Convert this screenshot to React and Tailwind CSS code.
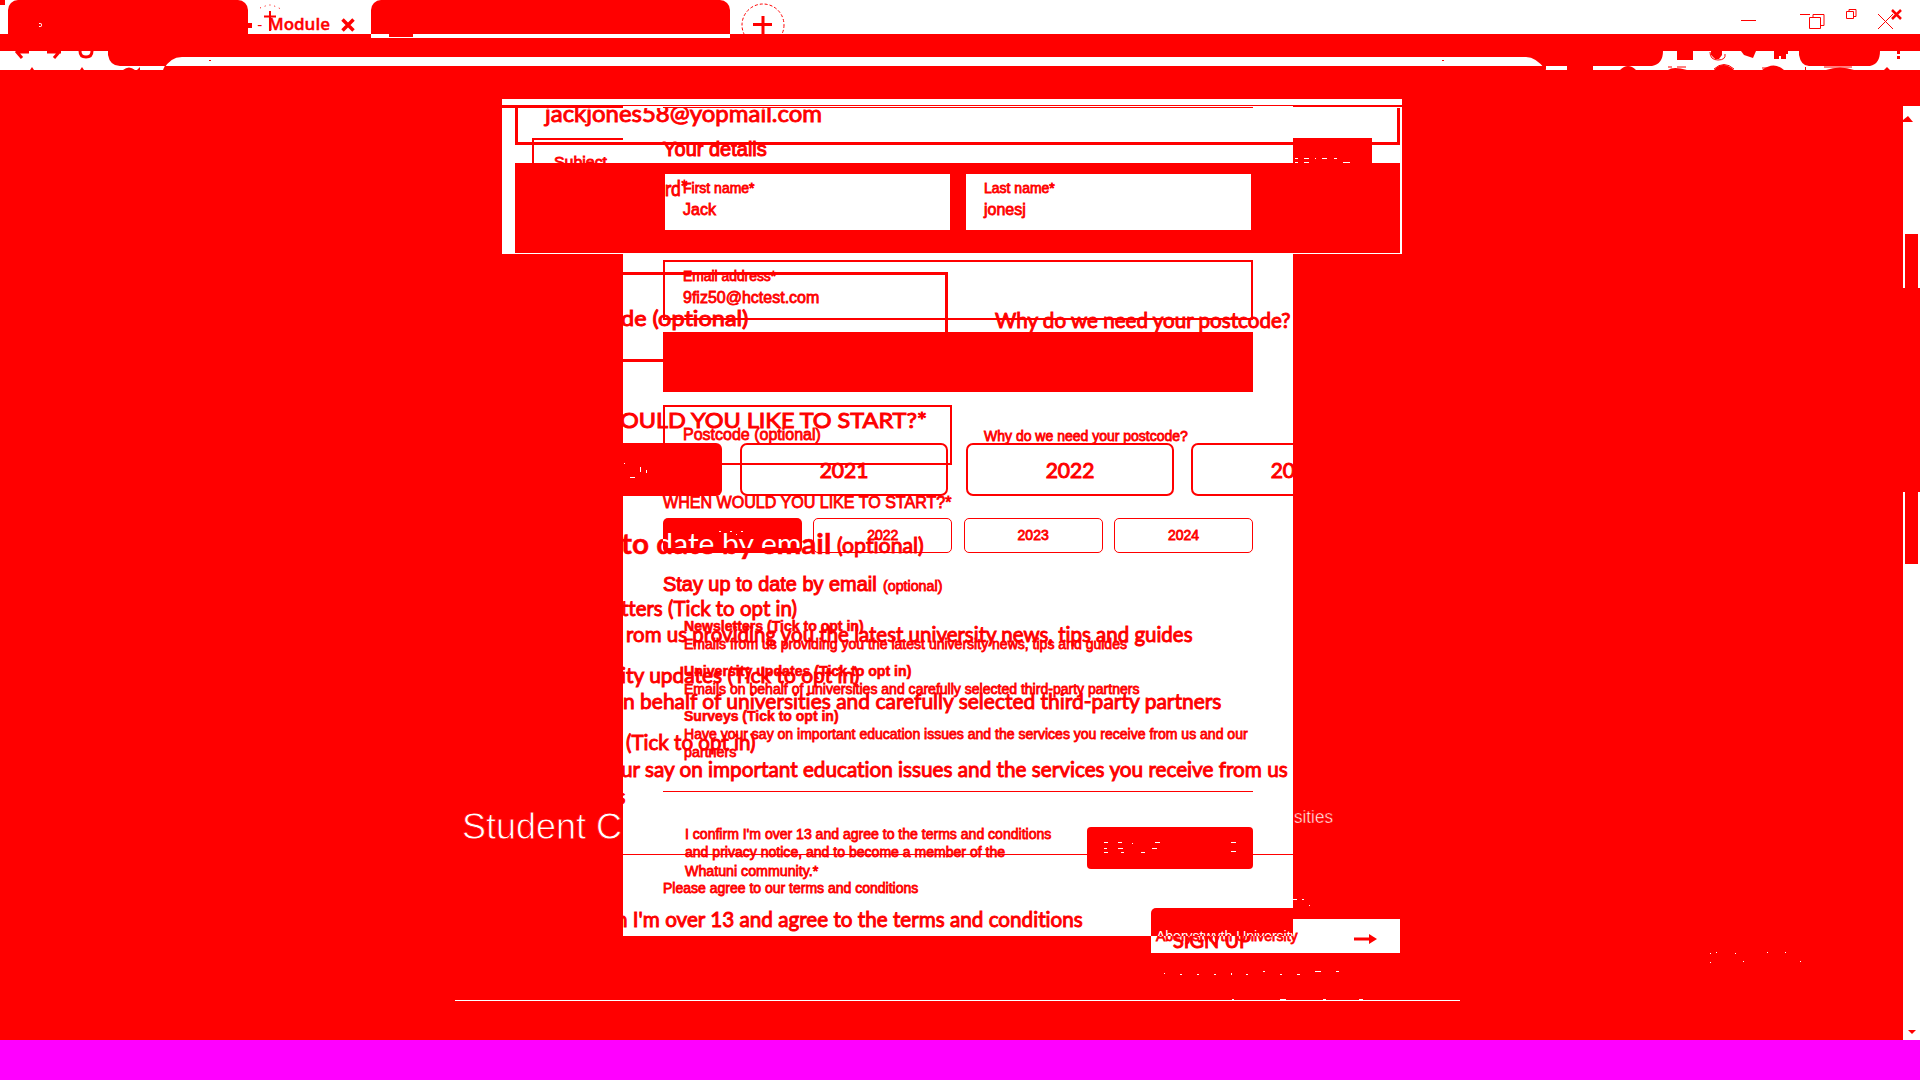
import { useLayoutEffect, useRef, useState } from "react";

/* Single line of text stretched to an exact width. */
function Fit({ w, className = "", children }) {
  const ref = useRef(null);
  const [k, setK] = useState(1);
  useLayoutEffect(() => {
    if (ref.current) setK(w / ref.current.offsetWidth);
  }, [w]);
  return (
    <span ref={ref} className={"inline-block origin-left whitespace-pre " + className} style={{ transform: `scaleX(${k})` }}>
      {children}
    </span>
  );
}

function Line({ w, className = "", text = "", children }) {
  return (
    <div className={"flex h-4 shrink-0 leading-4 " + className}>
      <Fit w={w} className={text}>{children}</Fit>
    </div>
  );
}

function Chrome() {
  return (
    <header className="h-[70px] bg-[#ff0000]">
      <div className="flex h-[34px] bg-white">
        <div className="h-[5px] w-[5px] bg-[#ff0000]" />
        <div className="ml-[3px] h-[34px] w-[240px] rounded-t-[10px] bg-[#ff0000] pl-[31px] pt-[23px]">
          <div className="h-[4px] w-[3px] rounded-r border border-l-0 border-white" />
        </div>
        <div className="flex h-[34px] w-[123px] items-start">
          <div className="mt-[23px] h-[5px] w-[4px] bg-[#ff0000]" />
          <span className="ml-[5px] mt-[16px] w-[6px] text-[15px] leading-4">-</span>
          <Fit w={62} className="ml-[5px] mt-[14px] font-['Open_Sans'] text-[17px] font-semibold leading-[20px] [-webkit-text-stroke:0.4px_#f00]">Module</Fit>
          <svg className="ml-auto mr-[16px] mt-[18px] shrink-0" width="14" height="14" viewBox="0 0 14 14" stroke="#f00" strokeWidth="3.500"><path d="M1.500 1.500l11 11M12.500 1.500l-11 11" /></svg>
        </div>
        <div className="h-[34px] w-[359px] rounded-t-[10px] bg-[#ff0000]" />
        <svg className="ml-[11px]" width="44" height="34" viewBox="0 0 44 34" fill="none" stroke="#f00">
          <circle cx="22" cy="25" r="21" strokeDasharray="3 2" />
          <path d="M12 24.500h19M22 16v18" strokeWidth="3" />
        </svg>
        <svg className="ml-auto" width="200" height="34" viewBox="0 0 200 34" fill="none" stroke="#f00">
          <path d="M21 20.500h15M80 14.500h10M89.500 17.500h11v11h-11zM93 17.500v-3h11v11h-3M126.500 11.500h7v7h-7zM129 11.500v-2h7v7h-2M158 14l15 15M173 14l-15 15" />
          <path d="M172 10l9 9M181 10l-9 9" strokeWidth="2.500" />
        </svg>
      </div>
      <div className="flex h-[4px] pl-[371px]">
        <div className="w-[359px] bg-white"><div className="ml-[18px] h-[3px] w-[24px] bg-[#ff0000]" /></div>
      </div>
      <svg className="mt-[13px] block" width="1920" height="19" viewBox="0 0 1920 19">
        <path fill="#fff" d="M0 0H108V4Q110 15 120 15H165L163 19H0ZM163 19Q170 6 182 6H1526Q1536 6 1546 19ZM1546 15h21v4h-21ZM1593 15H1652Q1663 13 1663 0H1799V4Q1801 15 1809 15H1870Q1880 13 1880 0H1920V19H1593Z" />
        <path fill="#f00" d="M165 15H1544L1546 19H163Z" />
        <path fill="none" stroke="#f00" strokeWidth="3" d="M16 0l6 7M16 1h13M47 1h14M60 0l-6 7M80 0q0 6 6 6t6-6" />
        <path fill="#f00" d="M30 19l2-3 2 3zM80 19l2-3 2 3zM123 19q6-5 12 0zM137 19l3-3v3zM209 9h2v1h-2zM1442 9h2v1h-2zM1677 0h16v9h-16zM1711 0h11v4l-3 4h-4l-4-4zM1741 0h15l-3 7-9-3zM1774 0h14v3h-2v5h-5V5h-2v3h-5zM1897 0h3v3h-3zM1897 5h3v3h-3zM1620 19q8-8 16 0zM1668 19q5-4 19 0zM1714 19q9-10 20 0zM1762 19q12-9 22 0zM1805 16h1v3h-1zM1826 19q14-5 28 0zM1884 19l3-3 3 3z" />
        <path fill="none" stroke="#f00" d="M1710 1q0 8 8 8t7-6M1668 16h4M1677 16h9M1714 18q10-9 20 0M1762 17h10M1824 16h28" />
      </svg>
      <svg className="absolute left-[258px] top-[2px]" width="26" height="32" viewBox="0 0 26 32" stroke="#f00" fill="none">
        <path d="M6 14.500h12M12 9v20" strokeWidth="2" /><path d="M2 6l8-3 4 0 9 4" strokeDasharray="1 4" />
      </svg>
    </header>
  );
}

function UpperPanel() {
  return (
    <section className="absolute left-[502px] top-[29px] flex h-[155px] w-[900px] flex-col overflow-hidden bg-white">
      <div className="mt-[6px] flex h-[3px] shrink-0 items-start">
        <div className="h-[3px] w-[121px] bg-[#ff0000]" />
        <div className="h-px w-[670px] bg-[#ff0000]" />
        <div className="h-[2px] w-[109px] bg-[#ff0000]" />
      </div>
      <div className="ml-[13px] flex h-[37px] w-[885px] shrink-0 items-start overflow-hidden border-x-[3px] border-b-[3px] border-t-0 border-[#ff0000] pl-[27px]">
        <Fit w={277} className="-mt-[7px] text-[23px] leading-6 [-webkit-text-stroke:0.9px_#f00]">jackjones58@yopmail.com</Fit>
      </div>
      <div className="mt-[18px] ml-[13px] h-[90px] w-[885px] shrink-0 bg-[#ff0000]" />
      <div className="absolute left-[30px] top-[39px] flex h-[25px] w-[91px] items-start overflow-hidden border-l-2 border-t-2 border-[#ff0000] pl-[20px] pt-[14px]">
        <Fit w={53} className="font-['Liberation_Sans'] text-[15px] leading-4 [-webkit-text-stroke:0.8px_#f00]">Subject</Fit>
      </div>
      <div className="absolute left-[791px] top-[39px] h-[25px] w-[79px] bg-[#ff0000] pt-[20px] pl-[2px]">
        <div className="flex gap-[6px]">
          <i className="h-px w-[3px] bg-white" /><i className="h-px w-[5px] bg-white" /><i className="h-px w-px bg-white" /><i className="h-px w-[5px] bg-white" /><i className="ml-px h-px w-[3px] bg-white" />
        </div>
        <div className="mt-[3px] flex gap-[6px]">
          <i className="h-px w-[3px] bg-white" /><i className="h-px w-[5px] bg-white" /><i className="ml-[28px] h-px w-[7px] bg-white" />
        </div>
      </div>
    </section>
  );
}

const small = "text-[14px] [-webkit-text-stroke:0.8px_#f00]";
const mid = "text-[16px] [-webkit-text-stroke:0.8px_#f00]";
const head = "text-[20px] [-webkit-text-stroke:1px_#f00]";
const strong = "text-[14px] font-bold [-webkit-text-stroke:0.6px_#f00]";

function DetailForm() {
  return (
    <div className="absolute inset-0 flex flex-col pl-10 font-['Liberation_Sans']">
      <div className="mt-px h-px w-[590px] shrink-0 bg-[#ff0000]" />
      <Line w={104} className="mt-[33px]" text={head}>Your details</Line>
      <div className="ml-[2px] mt-[17px] flex h-[56px] shrink-0 gap-4">
        <div className="w-[285px] bg-white pl-[18px] pt-[6px]">
          <Line w={72} text={small}>First name*</Line>
          <Line w={33} className="mt-[6px]" text={mid}>Jack</Line>
        </div>
        <div className="w-[285px] bg-white pl-[18px] pt-[6px]">
          <Line w={71} text={small}>Last name*</Line>
          <Line w={42} className="mt-[6px]" text={mid}>jonesj</Line>
        </div>
      </div>
      <div className="mt-[30px] h-[60px] w-[590px] shrink-0 border-2 border-[#ff0000] pl-[18px] pt-[6px]">
        <Line w={93} text={small}>Email address*</Line>
        <Line w={136} className="mt-[6px]" text={mid}>9fiz50@hctest.com</Line>
      </div>
      <div className="mt-3 h-[60px] w-[590px] shrink-0 bg-[#ff0000]" />
      <div className="mt-[13px] flex h-[60px] shrink-0">
        <div className="w-[289px] border-2 border-[#ff0000] pl-[18px] pt-[20px]">
          <Line w={138} text={mid}>Postcode (optional)</Line>
        </div>
        <Line w={204} className="ml-8 mt-[23px]" text={small}>Why do we need your postcode?</Line>
      </div>
      <Line w={288} className="mt-[30px]" text={mid}>WHEN WOULD YOU LIKE TO START?*</Line>
      <div className="mt-[7px] flex h-[35px] w-[590px] shrink-0 justify-between text-center text-[14px] leading-[32px] [-webkit-text-stroke:0.8px_#f00]">
        <div className="flex w-[139px] items-start gap-[4px] rounded-[5px] bg-[#ff0000] pl-[56px] pt-[13px]">
          <i className="h-px w-[2px] bg-white" /><i className="mt-[2px] h-px w-px bg-white" /><i className="h-px w-[2px] bg-white" /><i className="mt-[3px] h-px w-px bg-white" /><i className="h-px w-[2px] bg-white" />
        </div>
        <div className="w-[139px] rounded-[5px] border border-[#ff0000]">2022</div>
        <div className="w-[139px] rounded-[5px] border border-[#ff0000]">2023</div>
        <div className="w-[139px] rounded-[5px] border border-[#ff0000]">2024</div>
      </div>
      <div className="mt-[23px] flex h-4 shrink-0">
        <div className="w-[220px]"><Line w={214} text={head}>Stay up to date by email</Line></div>
        <Line w={59} className="mt-[2px]" text={small}>(optional)</Line>
      </div>
      <div className="ml-[21px] flex flex-col">
        <Line w={180} className="mt-[26px]" text={strong}>Newsletters (Tick to opt in)</Line>
        <Line w={443} className="mt-[2px]" text={small}>Emails from us providing you the latest university news, tips and guides</Line>
        <Line w={227} className="mt-[11px]" text={strong}>University updates (Tick to opt in)</Line>
        <Line w={455} className="mt-[2px]" text={small}>Emails on behalf of universities and carefully selected third-party partners</Line>
        <Line w={155} className="mt-[11px]" text={strong}>Surveys (Tick to opt in)</Line>
        <Line w={564} className="mt-[2px]" text={small}>Have your say on important education issues and the services you receive from us and our</Line>
        <Line w={52} className="mt-[2px]" text={small}>partners</Line>
      </div>
      <div className="mt-[31px] h-px w-[590px] shrink-0 bg-[#ff0000]" />
      <div className="mt-[34px] flex h-[53px] w-[590px] shrink-0 justify-between pl-[22px]">
        <div className="flex w-[366px] flex-col">
          <Line w={366} text={small}>I confirm I'm over 13 and agree to the terms and conditions</Line>
          <Line w={320} className="mt-[2px]" text={small}>and privacy notice, and to become a member of the</Line>
          <Line w={133} className="mt-[3px]" text={small}>Whatuni community.*</Line>
        </div>
        <div className="mt-px flex h-[42px] w-[166px] justify-between rounded-[4px] bg-[#ff0000] px-[17px] pt-[15px]">
          <div className="flex flex-col justify-between pb-[16px]">
            <div className="flex gap-[10px]"><i className="h-px w-[4px] bg-white" /><i className="h-px w-[4px] bg-white" /><i className="mt-px h-px w-px bg-white" /><i className="ml-[12px] h-px w-[5px] bg-white" /></div>
            <div className="flex gap-[11px]"><i className="h-px w-[3px] bg-white" /><i className="h-px w-[5px] bg-white" /><i className="ml-[18px] h-px w-[5px] bg-white" /></div>
            <div className="flex gap-[13px]"><i className="h-px w-[4px] bg-white" /><i className="h-px w-[3px] bg-white" /><i className="ml-[4px] h-px w-[4px] bg-white" /></div>
          </div>
          <div className="h-[10px] w-[5px] border-y border-white" />
        </div>
      </div>
      <Line w={255} className="mt-px" text={small}>Please agree to our terms and conditions</Line>
    </div>
  );
}

const big = "text-[22px] [-webkit-text-stroke:1px_#f00]";

function EnlargedForm() {
  return (
    <div className="absolute inset-0 flex flex-col overflow-hidden">
      <Line w={23} className="ml-[42px] mt-[74px]" text={big}>rd*</Line>
      <div className="mt-[76px] flex h-[90px] shrink-0">
        <div className="w-[325px] shrink-0 border-[3px] border-l-0 border-[#ff0000] pt-[35px]">
          <Line w={127} className="-ml-[2px]" text={big}>de (optional)</Line>
        </div>
        <Line w={296} className="ml-[47px] mt-[40px]" text={big}>Why do we need your postcode?</Line>
      </div>
      <Line w={307} className="-ml-[3px] mt-[50px]" text={big}>OULD YOU LIKE TO START?*</Line>
      <div className="mt-[15px] flex h-[53px] shrink-0 gap-[18px] text-center text-[21px] leading-[50px] [-webkit-text-stroke:1px_#f00]">
        <div className="flex w-[99px] shrink-0 gap-[5px] rounded-r-[6px] bg-[#ff0000] pl-px pt-[20px]">
          <i className="h-px w-px bg-white" /><i className="mt-[14px] h-px w-[5px] bg-white" /><i className="mt-[4px] h-[5px] w-px bg-white" /><i className="mt-[7px] h-[3px] w-px bg-white" />
        </div>
        <div className="w-[208px] shrink-0 rounded-[7px] border-2 border-[#ff0000]">2021</div>
        <div className="w-[208px] shrink-0 rounded-[7px] border-2 border-[#ff0000]">2022</div>
        <div className="-ml-px w-[208px] shrink-0 rounded-[7px] border-2 border-[#ff0000]">2023</div>
      </div>
      <div className="mt-[39px] flex h-4 shrink-0">
        <div className="relative w-[214px]">
          <Line w={210} className="-ml-[2px]" text="text-[29px] font-bold [-webkit-text-stroke:0.5px_#f00]">to date by email</Line>
          <div className="absolute -top-[10px] left-0 h-[28px] w-[179px] overflow-hidden pt-[10px] [clip-path:inset(0_0_5px_40px)]">
            <Line w={210} className="-ml-[2px]" text="text-[29px] text-white">to date by email</Line>
          </div>
        </div>
        <Line w={87} className="mt-[2px]" text={big}>(optional)</Line>
      </div>
      <Line w={176} className="-ml-[2px] mt-[49px]" text={big}>tters (Tick to opt in)</Line>
      <Line w={567} className="ml-[3px] mt-[10px]" text={big}>rom us providing you the latest university news, tips and guides</Line>
      <Line w={238} className="-ml-[2px] mt-[25px]" text={big}>ity updates (Tick to opt in)</Line>
      <Line w={598} className="mt-[10px]" text={big}>n behalf of universities and carefully selected third-party partners</Line>
      <Line w={130} className="ml-[3px] mt-[25px]" text={big}>(Tick to opt in)</Line>
      <Line w={667} className="-ml-[2px] mt-[11px]" text={big}>ur say on important education issues and the services you receive from us</Line>
      <Line w={10} className="-ml-[7px] mt-[11px]" text={big}>s</Line>
      <div className="mt-[50px] h-px shrink-0 bg-[#ff0000]" />
      <div className="mt-[53px] flex h-7 shrink-0 justify-between">
        <div className="-ml-[7px] w-[500px]"><Line w={467} className="mt-[3px]" text={big}>n I'm over 13 and agree to the terms and conditions</Line></div>
        <div className="w-[142px] rounded-tl-[5px] bg-[#ff0000]" />
      </div>
    </div>
  );
}

export default function App() {
  return (
    <div className="relative flex h-[1080px] w-[1920px] flex-col overflow-hidden bg-[#ff00ff] font-['Lato',sans-serif] text-[#ff0000] [font-variant-ligatures:none]">
      <Chrome />
      <div className="flex h-[970px] shrink-0">
        <main className="relative w-[1903px] overflow-hidden bg-[#ff0000]">
          <UpperPanel />
          <div className="absolute left-[462px] top-[737px] font-['Liberation_Sans'] text-white">
            <Fit w={160} className="text-[36px] leading-[40px] [-webkit-text-stroke:0.8px_#f00]">Student C</Fit>
          </div>
          <div className="absolute left-[1294px] top-[736px] font-['Liberation_Sans'] text-white">
            <Fit w={39} className="text-[18px] leading-4 [-webkit-text-stroke:0.5px_#f00]">sities</Fit>
          </div>
          <div className="absolute left-[1293px] top-[829px] flex gap-[5px]">
            <i className="h-px w-[4px] bg-white" /><i className="h-px w-[2px] bg-white" /><i className="mt-[6px] h-px w-px bg-white" />
          </div>
          <div className="absolute left-[1151px] top-[849px] flex h-[34px] w-[249px] items-start justify-between bg-white pl-[22px] pr-[23px] pt-[10px]">
            <Fit w={78} className="text-[21px] leading-[20px] [-webkit-text-stroke:1px_#f00]">SIGN UP</Fit>
            <svg className="mt-[4px]" width="23" height="12" viewBox="0 0 23 12"><path d="M0 4.500h15V1l8 5-8 5V7.500H0z" fill="#f00" /></svg>
          </div>
          <div className="absolute left-[623px] top-[184px] h-[682px] w-[670px] bg-white" />
          <section className="absolute left-[623px] top-[36px] h-[830px] w-[670px]">
            <DetailForm />
            <EnlargedForm />
          </section>
          <div className="absolute left-[1151px] top-[866px] flex h-[17px] w-[142px] items-start overflow-hidden bg-white pl-[22px]">
            <Fit w={78} className="-mt-[6px] text-[21px] leading-[20px] [-webkit-text-stroke:1px_#f00]">SIGN UP</Fit>
          </div>
          <div className="absolute left-[1156px] top-[858px] flex h-5 items-start font-['Liberation_Sans']">
            <Fit w={142} className="text-[14px] leading-4 [-webkit-text-stroke:0.8px_#f00]">Aberystwyth University</Fit>
            <div className="absolute left-0 top-0 flex h-[8px] w-[137px] items-start overflow-hidden text-white"><Fit w={142} className="text-[14px] leading-4">Aberystwyth University</Fit></div>
          </div>
          <div className="absolute left-[1164px] top-[901px] flex w-[175px] justify-between">
            <i className="mt-[2px] h-px w-px bg-white" /><i className="mt-[3px] h-px w-[2px] bg-white" /><i className="mt-[3px] h-px w-[2px] bg-white" /><i className="mt-[3px] h-px w-[2px] bg-white" /><i className="mt-[2px] h-[2px] w-px bg-white" /><i className="mt-[3px] h-px w-[2px] bg-white" /><i className="h-px w-[2px] bg-white" /><i className="mt-[3px] h-px w-[2px] bg-white" /><i className="mt-[3px] h-px w-[3px] bg-white" /><i className="h-px w-[6px] bg-white" /><i className="h-px w-[3px] bg-white" />
          </div>
          <div className="absolute left-[455px] top-[930px] h-px w-[1005px] bg-white" />
          <div className="absolute left-[1232px] top-[929px] flex gap-[37px]">
            <i className="h-px w-[2px] bg-white" /><i className="ml-[9px] h-px w-[6px] bg-white" /><i className="h-px w-[3px] bg-white" /><i className="-ml-[4px] h-px w-[4px] bg-white" />
          </div>
          <div className="absolute left-[1710px] top-[882px] h-[10px] w-[92px]">
            <div className="flex"><i className="mt-px h-px w-px bg-white" /><i className="ml-[5px] h-px w-px bg-white" /><i className="ml-[18px] mt-px h-px w-px bg-white" /><i className="ml-[31px] h-px w-px bg-white" /><i className="ml-[17px] h-px w-px bg-white" /></div>
            <div className="mt-[7px] flex"><i className="mt-px h-px w-px bg-white" /><i className="ml-[32px] h-px w-px bg-white" /><i className="ml-[56px] h-px w-px bg-white" /></div>
          </div>
        </main>
        <aside className="flex w-[17px] flex-col items-end bg-white">
          <div className="h-[36px] w-full shrink-0 bg-[#ff0000]" />
          <svg className="mt-[10px] shrink-0 self-start" width="10" height="6" viewBox="0 0 10 6"><path d="M0 6V4L5 0l5 6z" fill="#f00" /></svg>
          <div className="mr-[2px] mt-[112px] h-[54px] w-[13px] shrink-0 bg-[#ff0000]" />
          <div className="h-[204px] w-full shrink-0 bg-[#ff0000]" />
          <div className="mr-[2px] h-[72px] w-[13px] shrink-0 bg-[#ff0000]" />
          <svg className="mb-[6px] mr-[4px] mt-auto" width="8" height="4" viewBox="0 0 8 4"><path d="M0 0h8L4 4z" fill="#f00" /></svg>
        </aside>
      </div>
    </div>
  );
}
